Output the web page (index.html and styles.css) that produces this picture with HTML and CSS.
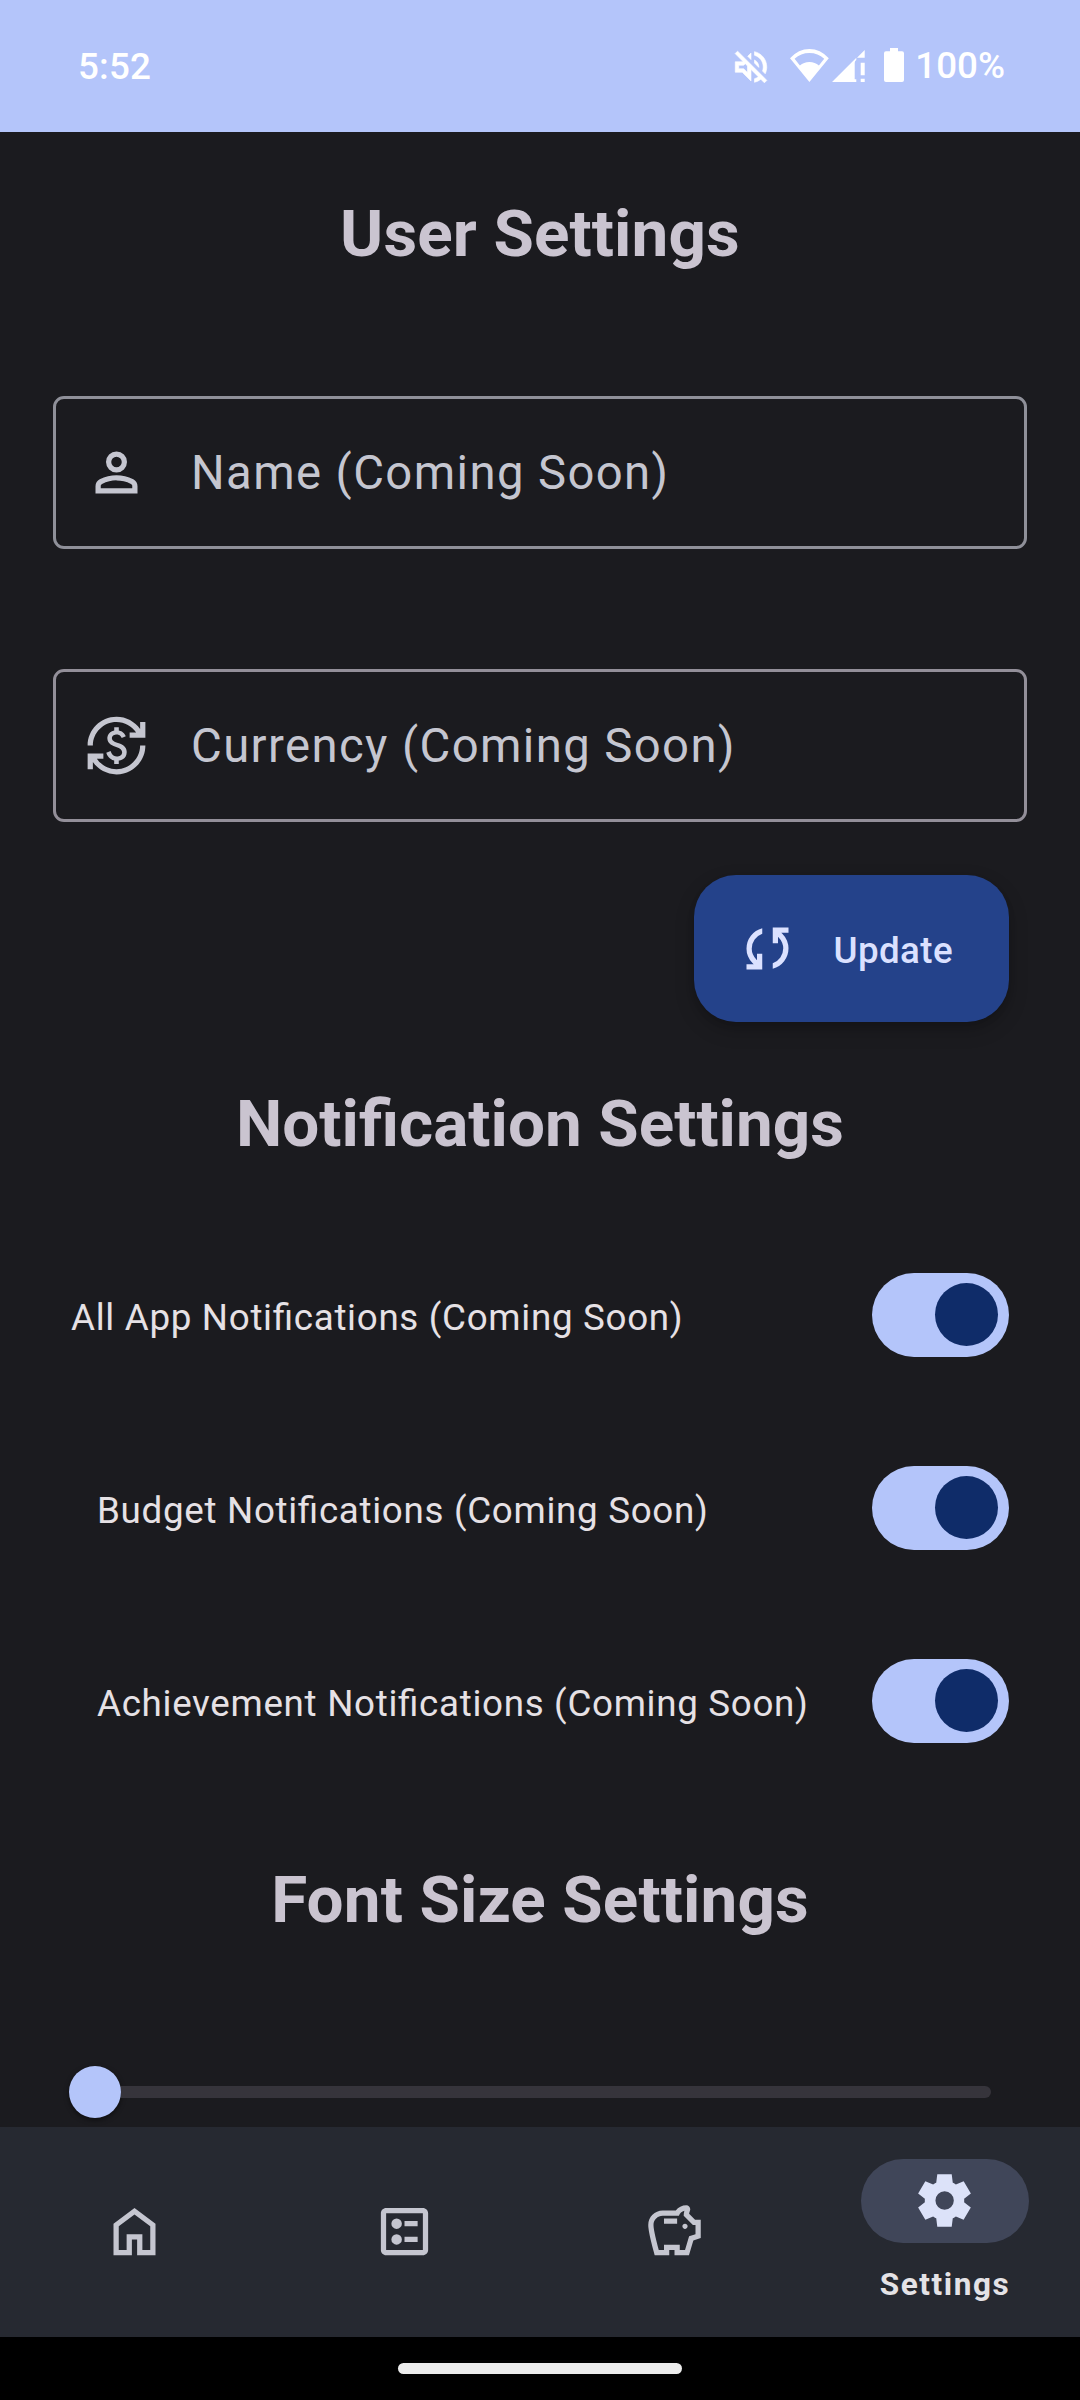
FILE: index.html
```html
<!DOCTYPE html>
<html lang="en">
<head>
<meta charset="utf-8">
<title>Settings</title>
<link rel="stylesheet" href="styles.css">
</head>
<body>
<header class="status">
  <span class="clock">5:52</span>
  <div class="status-icons">
    <svg class="ico-mute" viewBox="0 0 24 24"><path d="M4.34 2.93L2.93 4.34 7.29 8.7 7 9H3v6h4l5 5v-6.59l4.18 4.18c-.65.49-1.38.88-2.18 1.11v2.06c1.34-.3 2.57-.92 3.61-1.75l2.05 2.05 1.41-1.41L4.34 2.93zM10 15.17L7.83 13H5v-2h2.83l.88-.88L10 11.41v3.76zM19 12c0 .82-.15 1.61-.41 2.34l1.53 1.53c.56-1.17.88-2.48.88-3.87 0-4.28-2.99-7.86-7-8.77v2.06c2.89.86 5 3.54 5 6.71zm-7-8l-1.88 1.88L12 7.76zm4.5 8c0-1.77-1.02-3.29-2.5-4.03v1.79l2.48 2.48c.01-.08.02-.16.02-.24z"/></svg>
    <svg class="ico-wifi" viewBox="0 0 39 33"><path fill-rule="evenodd" d="M19.4 33L0 9.2Q8.5 0 19.4 0T38.8 9.2zM4.6 9.7L9.9 16.4Q13.7 12.9 19.4 12.9T28.9 16.4L34.2 9.7Q28 4 19.4 4T4.6 9.7z"/></svg>
    <svg class="ico-signal" viewBox="0 0 33 32"><path d="M32.7 0V7.7H25zM0 32L24.3 7.7V10Q22.7 11 22.7 13V29.3H24.3V32zM28.7 12.7h4v12.6h-4zM28.7 28.7h4V32h-4z"/></svg>
    <svg class="ico-battery" viewBox="0 0 20 34"><path d="M6 0h8v3.3h4q2 0 2 2V32q0 2-2 2H2q-2 0-2-2V5.3q0-2 2-2h4z"/></svg>
    <span class="percent">100%</span>
  </div>
</header>

<main class="content">
  <h1 class="heading">User Settings</h1>
  <div class="field field-name">
    <svg class="icon" viewBox="0 0 24 24"><path d="M12 12q-1.65 0-2.825-1.175T8 8t1.175-2.825T12 4t2.825 1.175T16 8t-1.175 2.825T12 12m-8 8v-2.8q0-.85.438-1.562T5.6 14.55q1.55-.775 3.15-1.162T12 13t3.25.388t3.15 1.162q.725.375 1.163 1.088T20 17.2V20zm2-2h12v-.8q0-.275-.137-.5t-.363-.35q-1.35-.675-2.725-1.012T12 15t-2.775.338T6.5 16.35q-.225.125-.363.35T6 17.2zm6-8q.825 0 1.413-.587T14 8t-.587-1.412T12 6t-1.412.588T10 8t.588 1.413T12 10"/></svg>
    <span class="field-label">Name (Coming Soon)</span>
  </div>
  <div class="field field-currency">
    <svg class="icon" viewBox="0 0 24 24"><path d="M12.89 11.1c-1.78-.59-2.64-.96-2.64-1.9 0-1.02 1.11-1.39 1.81-1.39 1.31 0 1.79.99 1.9 1.34l1.58-.67c-.15-.44-.82-1.91-2.66-2.23V5h-1.75v1.26c-2.6.56-2.62 2.85-2.62 2.96 0 2.27 2.25 2.91 3.35 3.31 1.58.56 2.28 1.07 2.28 2.03 0 1.13-1.05 1.61-1.98 1.61-1.82 0-2.34-1.87-2.4-2.09l-1.66.67c.63 2.19 2.28 2.78 3.02 2.96V19h1.75v-1.24c.52-.09 3.02-.59 3.02-3.22.01-1.39-.6-2.61-3-3.44zM3 21H1v-6h6v2H4.52c1.61 2.41 4.36 4 7.48 4 4.97 0 9-4.03 9-9h2c0 6.08-4.92 11-11 11-3.72 0-7.01-1.85-9-4.67V21zM1 12C1 5.92 5.92 1 12 1c3.72 0 7.01 1.85 9 4.67V3h2v6h-6V7h2.48C17.87 4.59 15.12 3 12 3c-4.97 0-9 4.03-9 9H1z"/></svg>
    <span class="field-label">Currency (Coming Soon)</span>
  </div>
  <button class="update" type="button">
    <svg class="icon" viewBox="0 0 24 24"><path d="M4 20v-2h2.75l-.4-.35q-1.225-1.225-1.787-2.662Q4 13.55 4 12.05q0-2.775 1.663-4.937Q7.325 4.95 10 4.25v2.1Q8.2 7 7.1 8.563 6 10.125 6 12.05q0 1.125.425 2.187Q6.85 15.3 7.75 16.2l.25.25V14h2v6zm10-.25v-2.1q1.8-.65 2.9-2.212Q18 13.875 18 11.95q0-1.125-.425-2.187Q17.15 8.7 16.25 7.8L16 7.55V10h-2V4h6v2h-2.75l.4.35q1.225 1.225 1.788 2.663Q20 10.45 20 11.95q0 2.775-1.662 4.938Q16.675 19.05 14 19.75z"/></svg>
    <span class="update-label">Update</span>
  </button>

  <h2 class="heading heading-notify">Notification Settings</h2>
  <div class="toggles">
    <div class="toggle-row"><span class="toggle-label">All App Notifications (Coming Soon)</span><span class="switch"><span class="switch-thumb"></span></span></div>
    <div class="toggle-row nested"><span class="toggle-label">Budget Notifications (Coming Soon)</span><span class="switch"><span class="switch-thumb"></span></span></div>
    <div class="toggle-row nested"><span class="toggle-label">Achievement Notifications (Coming Soon)</span><span class="switch"><span class="switch-thumb"></span></span></div>
  </div>

  <h2 class="heading heading-font">Font Size Settings</h2>
  <div class="slider"><span class="slider-thumb"></span><span class="slider-track"></span></div>
</main>

<nav class="nav">
  <a class="nav-item"><svg class="icon" viewBox="0 0 24 24"><path d="M6 19h3v-6h6v6h3v-9l-6-4.5L6 10zm-2 2V9l8-6 8 6v12h-7v-6h-2v6z"/></svg></a>
  <a class="nav-item"><svg class="icon" viewBox="0 0 24 24"><path fill-rule="evenodd" d="M5 3h14c1.1 0 2 .9 2 2v14c0 1.1-.9 2-2 2H5c-1.1 0-2-.9-2-2V5c0-1.1.9-2 2-2zm0 2v14h14V5zM12 8h5v2h-5zM12 14h5v2h-5zM9 7a2 2 0 1 0 0 4 2 2 0 0 0 0-4zM9 13a2 2 0 1 0 0 4 2 2 0 0 0 0-4z"/></svg></a>
  <a class="nav-item"><svg class="icon" viewBox="0 0 24 24"><path d="M15 10c0-.55.45-1 1-1s1 .45 1 1-.45 1-1 1-1-.45-1-1zM8 9h5V7H8v2zm14-1.5v6.97l-2.82.94L17.5 21H12v-2h-2v2H4.5S2 12.54 2 9.5C2 6.46 4.46 4 7.5 4h5c.91-1.21 2.36-2 4-2 .83 0 1.5.67 1.5 1.5 0 .21-.04.4-.12.58-.14.34-.26.73-.32 1.15l2.27 2.27H22zm-2 2h-1L15.5 6c0-.65.09-1.29.26-1.91-.97.25-1.76.97-2.09 1.91H7.5C5.57 6 4 7.57 4 9.5c0 1.88 1.22 6.65 2.01 9.5H8v-2h6v2h2.01l1.55-5.15 2.44-.82V9.5z"/></svg></a>
  <a class="nav-item selected">
    <span class="pill"><svg class="icon" viewBox="0 0 24 24"><path d="m9.25 22l-.4-3.2q-.325-.125-.612-.3t-.563-.375L4.7 19.375l-2.75-4.75l2.575-1.95Q4.5 12.5 4.5 12.338v-.675q0-.163.025-.338L1.95 9.375l2.75-4.75l2.975 1.25q.275-.2.575-.375t.6-.3l.4-3.2h5.5l.4 3.2q.325.125.613.3t.562.375l2.975-1.25l2.75 4.75l-2.575 1.95q.025.175.025.338v.674q0 .163-.05.338l2.575 1.95l-2.75 4.75l-2.95-1.25q-.275.2-.575.375t-.6.3l-.4 3.2zm2.8-6.5q1.45 0 2.475-1.025T15.55 12t-1.025-2.475T12.05 8.5q-1.475 0-2.488 1.025T8.55 12t1.013 2.475T12.05 15.5"/></svg></span>
    <span class="nav-label">Settings</span>
  </a>
</nav>
<footer class="gesture"><span class="gesture-bar"></span></footer>
</body>
</html>
```
FILE: styles.css
```css
* { box-sizing: border-box; }

body {
  margin: 0;
  width: 1080px;
  height: 2400px;
  display: flex;
  flex-direction: column;
  overflow: hidden;
  background: #1b1b1f;
  font-family: Roboto, sans-serif;
}

svg { display: block; flex: none; fill: currentColor; }
.icon { width: 63px; height: 63px; }

/* Status bar */
.status {
  flex: none;
  height: 132px;
  padding: 44px 75px 0 78px;
  display: flex;
  justify-content: space-between;
  align-items: flex-start;
  background: #b4c5fa;
  color: #fff;
  font-size: 36.75px;
  font-weight: 500;
  line-height: 43px;
}
.clock { padding-top: 1px; letter-spacing: .15px; }
.status-icons { display: flex; align-items: flex-start; }
.ico-mute { width: 42px; height: 42px; margin: 2px 18px 0 0; stroke: currentColor; stroke-width: .35px; }
.ico-wifi { width: 39px; height: 33px; margin: 5px 3px 0 0; }
.ico-signal { width: 33px; height: 32px; margin: 6px 19px 0 0; }
.ico-battery { width: 20px; height: 34px; margin: 4px 11.5px 0 0; }

/* Content */
.content {
  flex: none;
  height: 1995px;
  padding: 62px 53px 0;
  display: flex;
  flex-direction: column;
  overflow: hidden;
}
.heading {
  margin: 0;
  text-align: center;
  font-size: 65.625px;
  font-weight: 700;
  line-height: 80px;
  letter-spacing: .12px;
  font-variant-ligatures: common-ligatures;
  font-feature-settings: "liga" 1;
  color: #cac4d0;
}
.heading-notify { margin-top: 62px; letter-spacing: .04px; }
.heading-font { margin-top: 117px; }

.field {
  height: 153px;
  padding-left: 29px;
  display: flex;
  align-items: center;
  gap: 43px;
  border: 3px solid #8f9099;
  border-radius: 11px;
  color: #c5c6d0;
}
.field-name { margin-top: 122px; }
.field-currency { margin-top: 120px; border-color: #938f99; }
.field-label {
  padding-top: 1px;
  font-size: 47.25px;
  line-height: 56px;
  letter-spacing: 1.4px;
}

.update {
  align-self: flex-end;
  width: 315px;
  height: 147px;
  margin: 53px 18px 0 0;
  padding: 0 0 0 42px;
  display: flex;
  align-items: center;
  gap: 34.5px;
  border: 0;
  border-radius: 42px;
  background: #24428a;
  box-shadow: 0 8px 20px rgba(0, 0, 0, .2), 0 3px 6px rgba(0, 0, 0, .1);
  color: #dbe1ff;
  font-family: inherit;
}
.update-label {
  padding-top: 4px;
  font-size: 36.75px;
  font-weight: 500;
  line-height: 43px;
  letter-spacing: .4px;
}

.toggles {
  margin: 109px 18px 0;
  display: flex;
  flex-direction: column;
  gap: 109px;
}
.toggle-row {
  height: 84px;
  display: flex;
  align-items: center;
  justify-content: space-between;
}
.nested { padding-left: 26px; }
.toggle-label {
  padding-top: 5px;
  font-size: 36.75px;
  line-height: 43px;
  letter-spacing: .69px;
  font-variant-ligatures: common-ligatures;
  font-feature-settings: "liga" 1;
  white-space: nowrap;
  color: #e6e1e5;
}
.switch {
  width: 137px;
  height: 84px;
  padding: 0 11px 1px 0;
  display: flex;
  align-items: center;
  justify-content: flex-end;
  border-radius: 42px;
  background: #b4c5fa;
}
.switch-thumb {
  width: 63px;
  height: 63px;
  border-radius: 50%;
  background: #0f2c69;
}

.slider {
  margin: 126px 36px 0 16px;
  height: 52px;
  display: flex;
  align-items: center;
}
.slider-thumb {
  flex: none;
  width: 52px;
  height: 52px;
  border-radius: 50%;
  background: #b4c5fa;
  box-shadow: 0 2px 5px rgba(0, 0, 0, .5);
}
.slider-track {
  flex: 1;
  height: 12px;
  border-radius: 0 6px 6px 0;
  background: #36343b;
}

/* Bottom navigation */
.nav {
  flex: none;
  height: 210px;
  display: grid;
  grid-template-columns: repeat(4, 1fr);
  background: #262931;
  color: #c5c6d0;
}
.nav .icon { margin: 0 1px 1px 0; }
.nav-item {
  display: flex;
  flex-direction: column;
  align-items: center;
  justify-content: center;
}
.selected { justify-content: flex-start; padding-top: 32px; }
.pill {
  width: 168px;
  height: 84px;
  display: flex;
  align-items: center;
  justify-content: center;
  border-radius: 42px;
  background: #404659;
  color: #dce2f9;
}
.nav-label {
  margin-top: 23px;
  font-size: 31.5px;
  font-weight: 700;
  line-height: 37px;
  letter-spacing: 1.6px;
  color: #e4e2e6;
}

.gesture {
  flex: none;
  height: 63px;
  padding-top: 26px;
  display: flex;
  justify-content: center;
  background: #000;
}
.gesture-bar {
  width: 284px;
  height: 11px;
  border-radius: 5.5px;
  background: #ececec;
}
```
